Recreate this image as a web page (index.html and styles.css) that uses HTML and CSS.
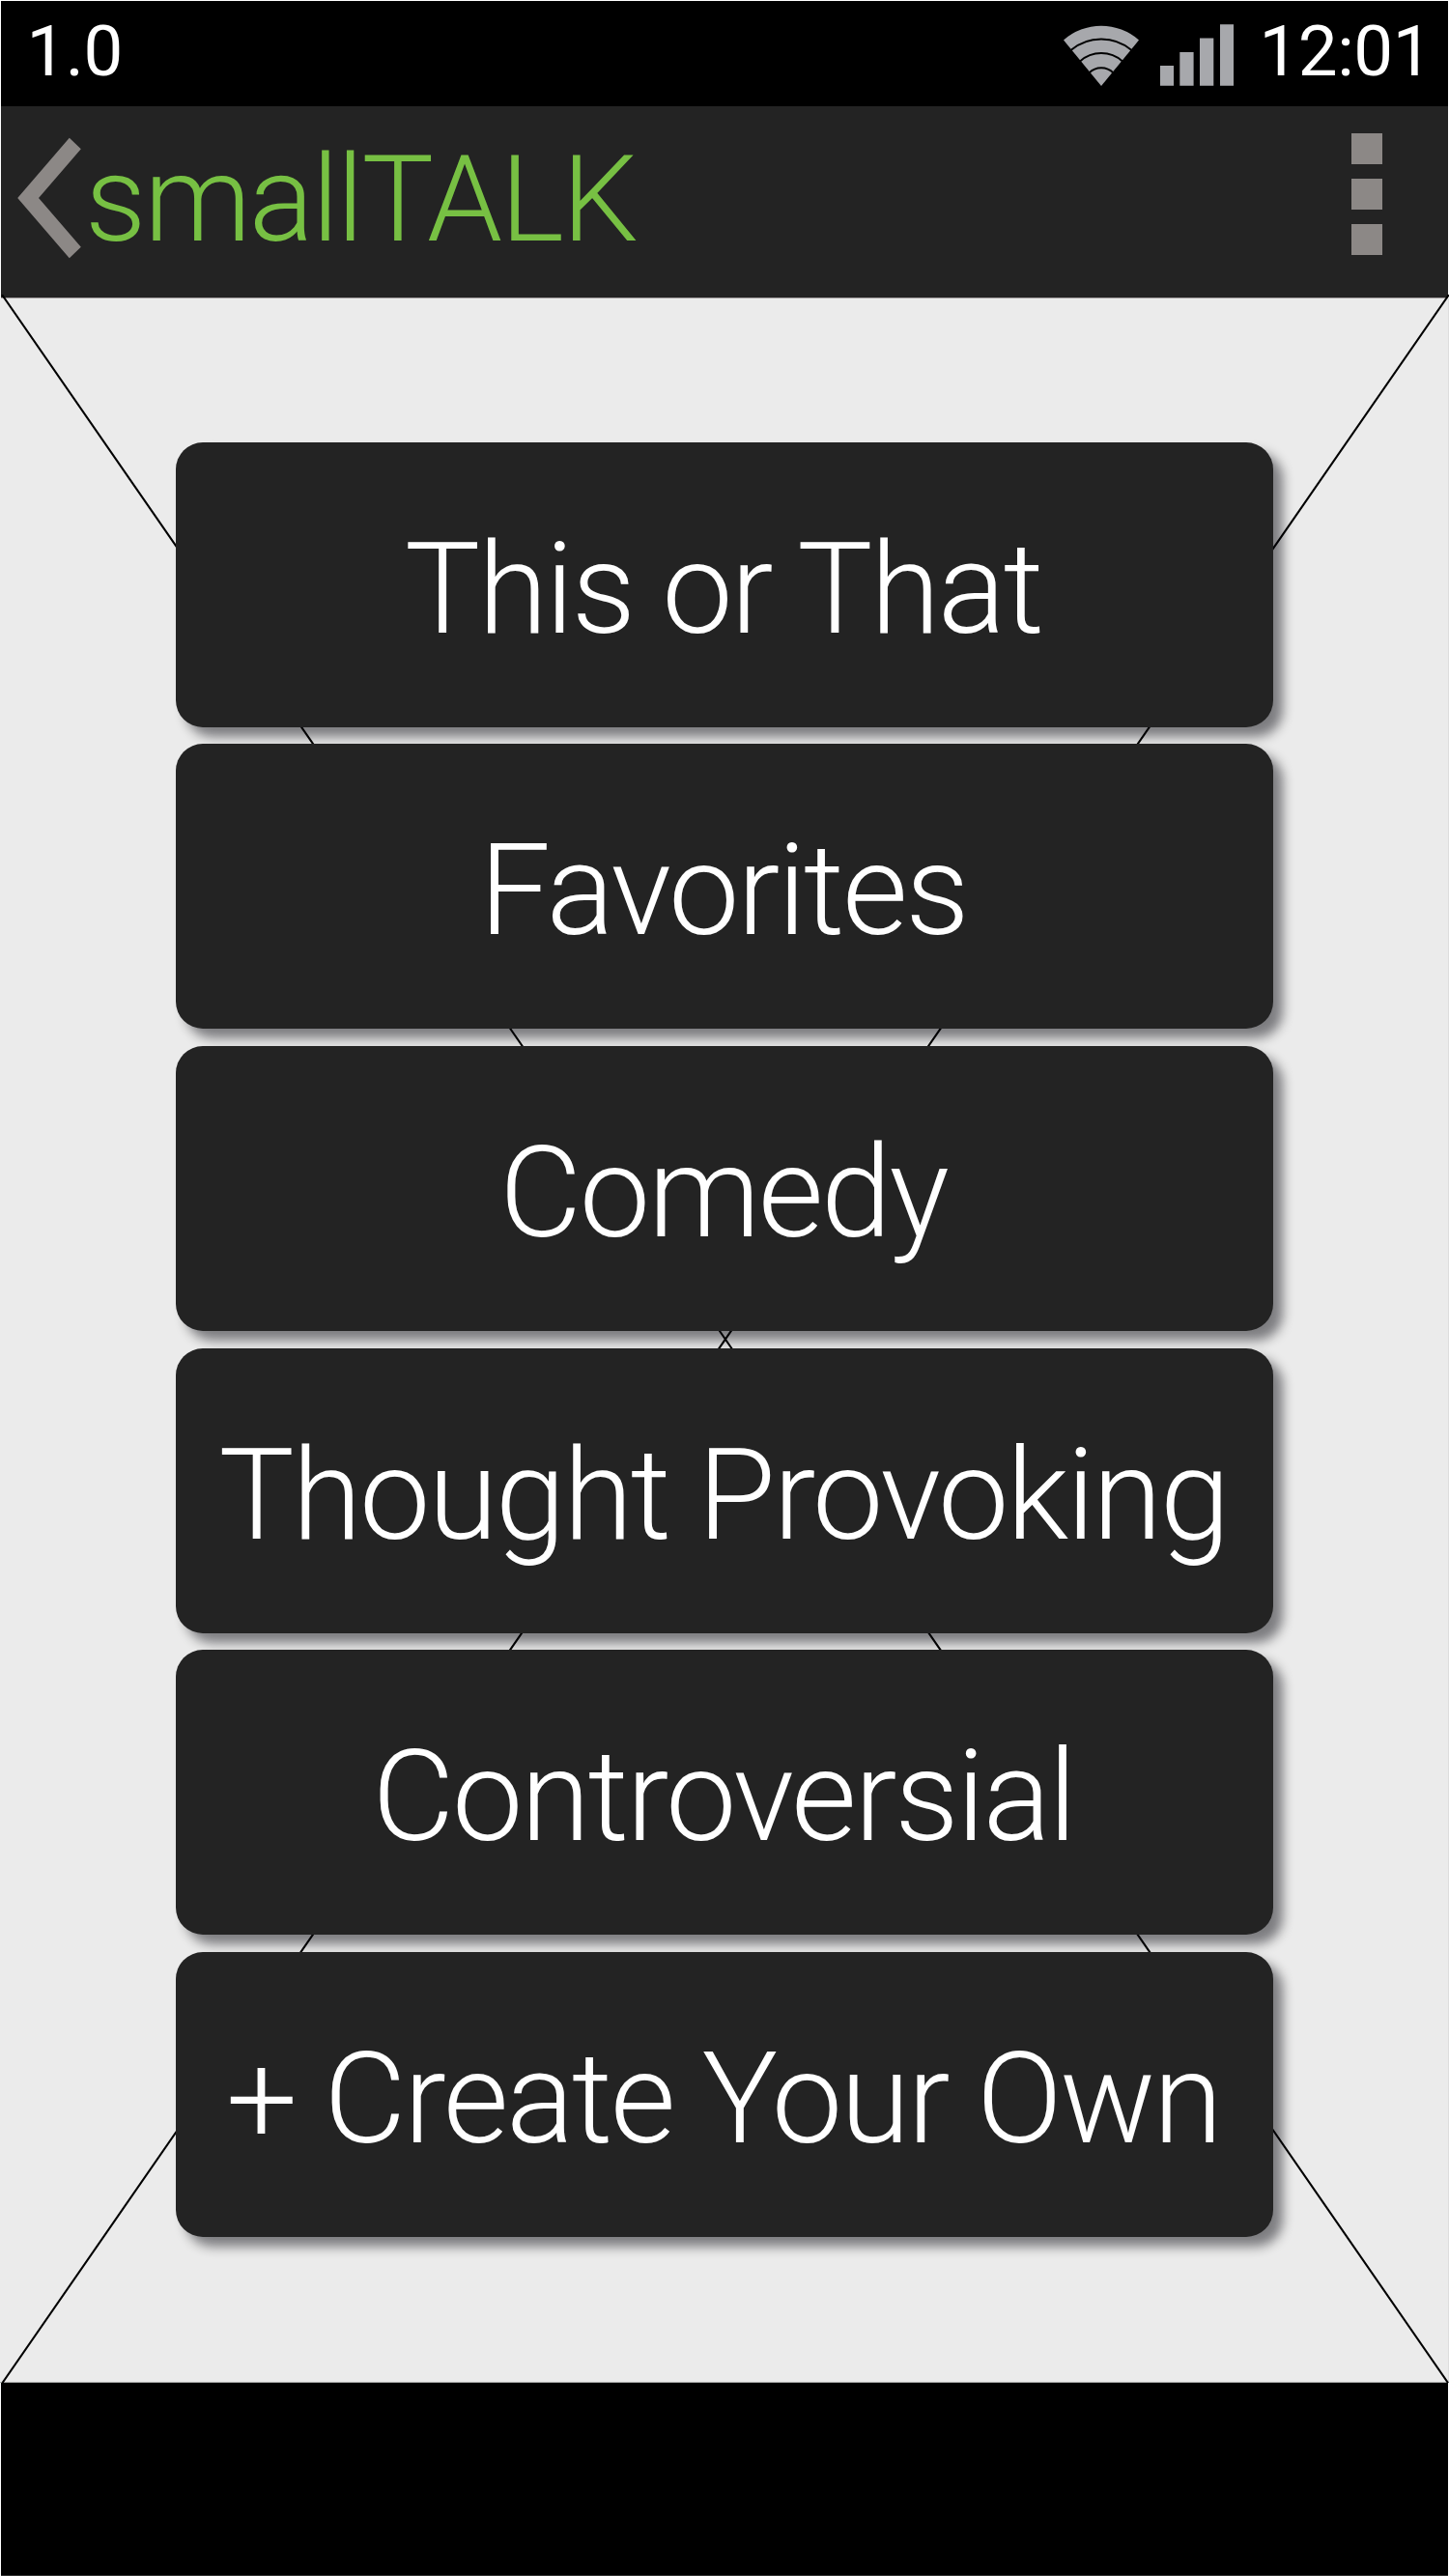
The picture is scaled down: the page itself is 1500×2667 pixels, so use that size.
FILE: index.html
```html
<!DOCTYPE html>
<html lang="en">
<head>
<meta charset="utf-8">
<title>smallTALK</title>
<link rel="stylesheet" href="styles.css">
</head>
<body>
<div class="screen">
  <div class="status">
    <span class="version">1.0</span>
    <svg class="wifi" width="80" height="64" viewBox="0 0 80 64">
      <path class="signal" d="M1 16.500A59 59 0 0 1 79 16.500L40 64Z"/>
      <path class="wave" d="M8.500 27A49 49 0 0 1 71.500 27M18 38.500A33 33 0 0 1 62 38.500M27.500 50.500A17.500 17.500 0 0 1 52.500 50.500"/>
    </svg>
    <svg class="bars" width="77" height="64" viewBox="0 0 77 64">
      <path class="signal" d="M1 43h14v20.700h-14zM21.300 29h14.300v34.700h-14.300zM42 14.500h14.300v49.200h-14.300zM63 .2h14v63.500h-14z"/>
    </svg>
    <time class="clock">12:01</time>
  </div>

  <header class="appbar">
    <svg class="back" width="70" height="128" viewBox="0 0 70 128">
      <path d="M4.200 64 57.800 1.700 69.800 13.300 26 64 69.800 114.700 57.800 126.300Z"/>
    </svg>
    <h1 class="title">smallTALK</h1>
    <div class="overflow"><i></i><i></i><i></i></div>
  </header>

  <main class="content">
    <svg class="diagonals" viewBox="0 0 1500 2162" preserveAspectRatio="none">
      <path d="M2 0 1499 2162M1500 0 2.500 2162"/>
    </svg>
    <nav class="menu">
      <button class="item">This or That</button>
      <button class="item">Favorites</button>
      <button class="item">Comedy</button>
      <button class="item">Thought Provoking</button>
      <button class="item">Controversial</button>
      <button class="item">+ Create Your Own</button>
    </nav>
  </main>

  <footer class="navbar"></footer>
</div>
</body>
</html>
```
FILE: styles.css
```css
* {
  box-sizing: border-box;
}

body {
  margin: 0;
  background: #fff;
  font-family: Roboto, "Liberation Sans", sans-serif;
}

.screen {
  display: flex;
  flex-direction: column;
  width: 1500px;
  height: 2667px;
}

/* Status bar */
.status {
  display: flex;
  align-items: flex-start;
  height: 109px;
  margin: 1px 1px 0;
  padding: 0 17px 0 26.5px;
  background: #000;
  color: #fff;
  font-size: 72.7px;
  line-height: 106px;
  letter-spacing: -0.5px;
}

.wifi {
  margin: 24px 20px 0 auto;
}

.bars {
  margin: 24px 26px 0 0;
}

.signal {
  fill: #a7a8ac;
}

.wave {
  fill: none;
  stroke: #000;
  stroke-width: 2;
}

/* App bar */
.appbar {
  display: flex;
  align-items: center;
  height: 199px;
  margin: 0 1px;
  padding: 0 68px 0 13px;
  background: #232323;
  border-bottom: 1px solid #a09b9c;
}

.back {
  margin: -8px 4px 0 0;
  fill: #8c8886;
}

.title {
  margin: 0;
  padding-bottom: 4px;
  color: #77c043;
  font-size: 125px;
  font-weight: 300;
  line-height: 150px;
  letter-spacing: -0.0175em;
}

.overflow {
  display: flex;
  flex-direction: column;
  gap: 15px;
  margin: -16px 0 0 auto;
}

.overflow i {
  width: 32px;
  height: 32px;
  background: #8c8886;
}

/* Topic list */
.content {
  position: relative;
  height: 2158px;
  padding-top: 148.8px;
  background: #ebebeb;
  border-right: 1px solid #dedede;
  border-bottom: 1px solid #a3a5a5;
}

/* The crossed lines start slightly above the content, over the app bar edge */
.diagonals {
  position: absolute;
  top: -4px;
  left: 0;
  width: 1500px;
  height: 2162px;
  fill: none;
  stroke: #000;
  stroke-width: 2.1;
}

.menu {
  position: relative;
  display: flex;
  flex-direction: column;
  gap: 17.65px;
  width: 1136px;
  margin-left: 182px;
}

.item {
  height: 295px;
  padding: 9px 2.4px 0 0;
  border: 0;
  border-radius: 28px;
  background: #232323;
  box-shadow: 10px 10px 12px rgba(0, 2, 8, 0.47);
  color: #fff;
  font-family: inherit;
  font-size: 131px;
  font-weight: 300;
  line-height: 154px;
  letter-spacing: -0.0178em;
  white-space: nowrap;
}

/* System navigation area */
.navbar {
  height: 200px;
  margin: 0 1px;
  background: #000;
  border-bottom: 1px solid #333;
}
```
